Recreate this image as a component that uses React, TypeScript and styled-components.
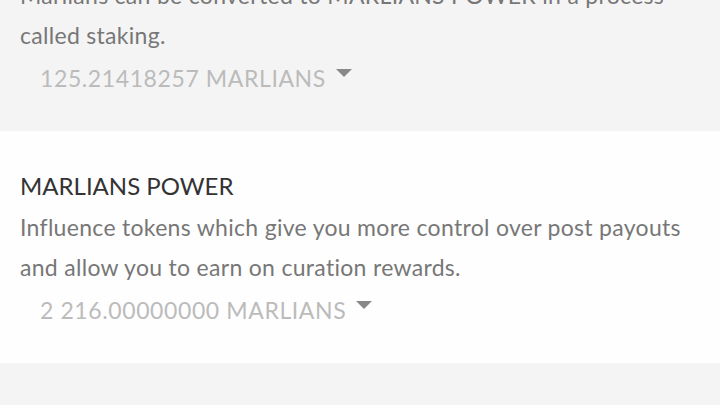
import React from "react";
import styled, { createGlobalStyle } from "styled-components";

const Global = createGlobalStyle`
  html, body { margin: 0; padding: 0; background: #f4f4f4; }
  body { font-family: Lato, "Open Sans", sans-serif; overflow: hidden; }
`;

// The wallet list is scrolled a little, so the first block starts above the fold.
const Page = styled.div`
  display: flex;
  flex-direction: column;
  margin-top: -25px;
`;

const Section = styled.section<{ $tone: "gray" | "white" }>`
  background: ${(p) => (p.$tone === "white" ? "#fefefe" : "#f4f4f4")};
  padding: ${(p) => (p.$tone === "white" ? "37px 20px 33px" : "0 20px 33px")};
`;

const Title = styled.h2`
  margin: 0 0 3px;
  font-size: 24px;
  font-weight: 400;
  line-height: 36px;
  color: #333;
`;

const Description = styled.p`
  margin: 0;
  font-size: 23px;
  line-height: 40px;
  letter-spacing: 0.3px;
  color: #777;
`;

const Amount = styled.button`
  display: flex;
  align-items: center;
  gap: 10px;
  margin: 3px 0 0;
  padding: 0 0 0 20px;
  border: none;
  background: transparent;
  font-family: inherit;
  font-size: 23px;
  line-height: 40px;
  letter-spacing: 0.6px;
  color: #bbb;
  cursor: pointer;
`;

const Caret = styled.span`
  width: 0;
  height: 0;
  border-left: 8px solid transparent;
  border-right: 8px solid transparent;
  border-top: 8px solid #888;
  margin-top: -10px;
`;

export default function App() {
  return (
    <>
      <Global />
      <Page>
        <Section $tone="gray">
          <Description>
            Marlians can be converted to MARLIANS POWER in a process called staking.
          </Description>
          <Amount>
            125.21418257 MARLIANS
            <Caret />
          </Amount>
        </Section>
        <Section $tone="white">
          <Title>MARLIANS POWER</Title>
          <Description>
            Influence tokens which give you more control over post payouts and allow you to earn on curation rewards.
          </Description>
          <Amount>
            2 216.00000000 MARLIANS
            <Caret />
          </Amount>
        </Section>
      </Page>
    </>
  );
}
